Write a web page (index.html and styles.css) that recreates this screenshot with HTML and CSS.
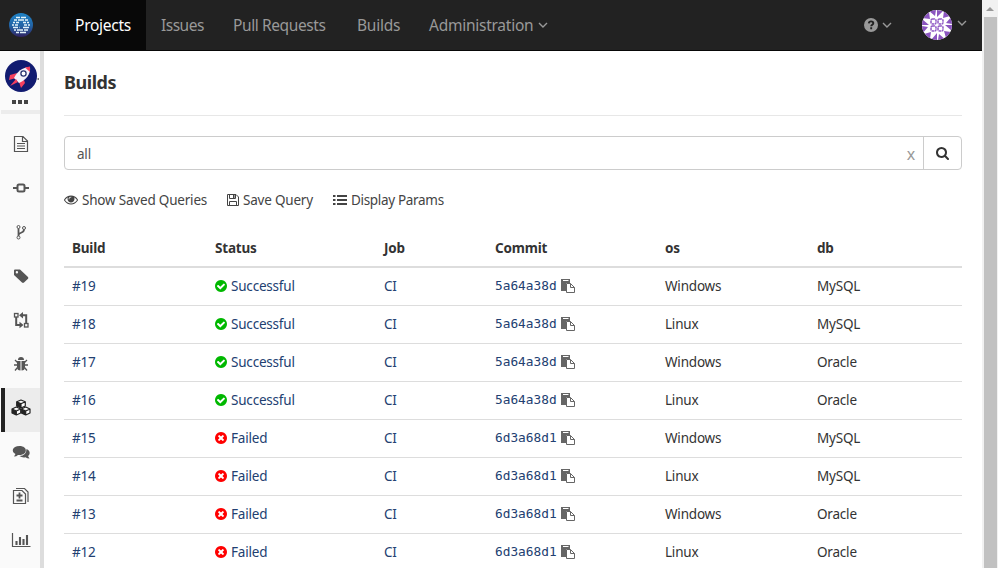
FILE: index.html
```
<!DOCTYPE html>
<html lang="en">
<head>
<meta charset="utf-8">
<title>Builds</title>
<link rel="stylesheet" href="styles.css">
</head>
<body>
<svg class="defs" aria-hidden="true">
<symbol id="ok" viewBox="0 0 1792 1792"><path d="M1412 734q0-28-18-46l-91-90q-19-19-45-19t-45 19l-408 407-226-226q-19-19-45-19t-45 19l-91 90q-18 18-18 46 0 27 18 45l362 362q19 19 45 19 27 0 46-19l543-543q18-18 18-45zm252 162q0 209-103 385.500t-279.500 279.500-385.500 103-385.500-103-279.500-279.500-103-385.500 103-385.500 279.500-279.500 385.500-103 385.500 103 279.500 279.500 103 385.500z"/></symbol>
<symbol id="fail" viewBox="0 0 1792 1792"><path d="M1277 1122q0-26-19-45l-181-181 181-181q19-19 19-45 0-27-19-46l-90-90q-19-19-46-19-26 0-45 19l-181 181-181-181q-19-19-45-19-27 0-46 19l-90 90q-19 19-19 46 0 26 19 45l181 181-181 181q-19 19-19 45 0 27 19 46l90 90q19 19 46 19 26 0 45-19l181-181 181 181q19 19 45 19 27 0 46-19l90-90q19-19 19-46zm387-226q0 209-103 385.500t-279.500 279.500-385.500 103-385.500-103-279.500-279.500-103-385.500 103-385.500 279.500-279.500 385.500-103 385.500 103 279.500 279.500 103 385.500z"/></symbol>
<symbol id="copy" viewBox="0 0 14 14"><path d="M0 0H9V4H5V12H0Z"/><path d="M2 1.500H7.500" stroke="#fff"/><path d="M5.500 4.500H9.500L13.500 8.500V13.500H5.500ZM9.500 4.500V8.500H13.500" fill="#fff" stroke="currentColor"/></symbol>
<symbol id="chev" viewBox="0 0 10 6"><path d="M1 1L5 5L9 1" fill="none" stroke="currentColor" stroke-width="1.400"/></symbol>
</svg>
<div class="app">
<div class="page">
<header class="nav">
  <div class="brand"><svg width="24" height="24" viewBox="0 0 24 24"><defs><linearGradient id="bg" x2="0" y2="1"><stop offset="0" stop-color="#1f83c6"/><stop offset=".55" stop-color="#2262a4"/><stop offset="1" stop-color="#302160"/></linearGradient></defs><circle cx="12" cy="12" r="12" fill="url(#bg)"/><g stroke="#e4f3fa" stroke-width="1.500"><path d="M7 4.500H11M12 4.500H17M5 7H8M9 7H15M16 7H19M4 9.500H6M7 9.500H10M14 9.500H17M18 9.500H20M3 12H5M6 12H9M15 12H18M19 12H21M4 14.500H9M10 14.500H10.500M14 14.500H20M5 17H7M8 17H14M15 17H19M7 19.500H10M11 19.500H17"/></g></svg></div>
  <nav class="links"><a class="t1 on">Projects</a><a class="t2">Issues</a><a class="t3">Pull Requests</a><a class="t4">Builds</a><a class="t5"><span>Administration</span><svg class="chev"><use href="#chev"/></svg></a></nav>
  <div class="user">
    <svg width="14" height="14" viewBox="0 0 14 14"><circle cx="7" cy="7" r="7" fill="#999"/><path d="M4.800 5.300C5 3.900 6 3.400 7 3.400C8.400 3.400 9.300 4.200 9.300 5.200C9.300 6.800 7.200 6.600 7.200 8.200M7.200 9.300V11.300" fill="none" stroke="#222" stroke-width="1.900"/></svg>
    <svg class="chev"><use href="#chev"/></svg>
    <svg class="avatar" width="30" height="30" viewBox="0 0 30 30"><clipPath id="round"><circle cx="15" cy="15" r="15"/></clipPath><g clip-path="url(#round)"><path fill="#fff" d="M0 0H30V30H0Z"/><g fill="#8b55c0"><path d="M6 0L14 0L13 6ZM15 0L21 1L15 7ZM22 1L28 6L21 8ZM0 8L7 2L8 9Z"/><path d="M30 6V14L24 13ZM30 15V21L23 15ZM29 22L24 28L22 21ZM24 30H16L17 24ZM15 30H9L15 23ZM8 29L2 24L9 22ZM0 24V16L6 17ZM0 15V9L7 15Z"/></g><g fill="none" stroke="#8f58c4" stroke-width="1.500" stroke-dasharray="2.400 .5"><rect x="9" y="9" width="5" height="5" rx="1.500"/><rect x="16" y="9" width="5" height="5" rx="1.500"/><rect x="9" y="16" width="5" height="5" rx="1.500"/><rect x="16" y="16" width="5" height="5" rx="1.500"/></g></g></svg>
    <svg class="chev last"><use href="#chev"/></svg>
  </div>
</header>
<div class="body">
<aside class="side">
  <div class="project"><svg width="34" height="32" viewBox="0 0 34 32"><circle cx="16" cy="16" r="16" fill="#111b70"/><path d="M12 13L5 15L4 20L11 18ZM19 20L20 23L16 28L14 22Z" fill="#f5405f"/><path d="M9 18C12 12 17 7 25 7C26 14 21 20 14 23Z" fill="#f3f1fa"/><path d="M20 7.500L25 6.500L25 12Z" fill="#f5405f"/><circle cx="18.500" cy="13.500" r="2.600" fill="#fff" stroke="#28326f" stroke-width="1.300"/><path d="M11 19L5 26L13 22Z" fill="#f5405f"/><path d="M32.500 18H34V20H32.500Z" fill="#777"/></svg></div>
  <div class="dots"><i></i><i></i><i></i></div>
  <div class="rule"></div>
  <div class="tools">
    <a><svg class="ic" viewBox="0 0 20 20"><path d="M4 2.500H12L16.500 7V17.500H3.500V2.500ZM11.500 2.500V7.500H16.500M6 9.500H14M6 12H14M6 14.500H14" fill="none" stroke="currentColor" stroke-width="1.200"/></svg></a>
    <a><svg class="ic" viewBox="0 0 20 20"><path d="M2 10H6M14 10H18" stroke="currentColor" stroke-width="2"/><rect x="6.500" y="6.500" width="7" height="7" rx="1.500" fill="none" stroke="currentColor" stroke-width="2"/></svg></a>
    <a><svg class="ic" viewBox="0 0 20 20"><g fill="none" stroke="currentColor"><circle cx="7.500" cy="5" r="1.500"/><circle cx="7.500" cy="15.500" r="1.500"/><circle cx="13" cy="6" r="1.500"/><path d="M7.500 6.500V14M13 7.500C13 11.500 8 10 7.500 13" stroke-width="1.800"/></g></svg></a>
    <a><svg class="ic" viewBox="0 0 20 20"><path d="M3 4.500Q3 3.500 4 3.500H9L17 11Q17.700 12 17 12.700L13 16.500Q12 17.300 11 16.500L3 9ZM5.900 5A1.200 1.200 0 1 0 5.900 7.400A1.200 1.200 0 1 0 5.900 5" fill="currentColor" fill-rule="evenodd"/></svg></a>
    <a><svg class="ic" viewBox="0 0 20 20"><g fill="none" stroke="currentColor"><rect x="3.500" y="3.500" width="3.500" height="3.500" stroke-width="1.300"/><rect x="13.500" y="13.500" width="3.500" height="3.500" stroke-width="1.300"/><path d="M5.200 7V15H9M15.200 13V5.200H11" stroke-width="2"/></g><path d="M8 5.200L12 2V8.400ZM12.500 15L8.500 11.800V18.200Z" fill="currentColor"/></svg></a>
    <a><svg class="ic" viewBox="0 0 20 20"><path d="M7 6A3 3 0 0 1 13 6ZM6 7H9.500V16.500Q6 16.500 6 13ZM10.500 7H14V13Q14 16.500 10.500 16.500Z" fill="currentColor"/><path d="M6.500 8.500L4 6M6 11H3M6.500 13.500L4 16.500M13.500 8.500L16 6M14 11H17M13.500 13.500L16 16.500" stroke="currentColor" stroke-width="1.300"/></svg></a>
    <a class="cur"><svg class="ic" viewBox="0 0 20 20"><g fill="#fff" stroke="#222" stroke-width="1.200" stroke-linejoin="round"><path d="M10 2L14.300 3.800V8L10 10L5.700 8V3.800ZM5.700 3.800L10 5.700L14.300 3.800M10 5.700V10"/><path d="M5.300 9L9.700 11V15L5.300 17L1 15V11ZM1 11L5.300 13L9.700 11M5.300 13V17M14.700 9L19 11V15L14.700 17L10.300 15V11ZM10.300 11L14.700 13L19 11M14.700 13V17"/></g><path d="M5.700 3.800L10 5.700V10L5.700 8ZM1 11L5.300 13V17L1 15ZM10.300 11L14.700 13V17L10.300 15Z" fill="#222"/></svg></a>
    <a><svg class="ic" viewBox="0 0 20 20"><path d="M15.500 7C20 9 19 13 17 14L18.500 16.500Q16 16.500 14.500 15.300Q11 16 8.500 14Q15.500 13.500 15.500 7Z" fill="currentColor"/><path d="M8.500 4C17 4 17 13 8.500 13L7 12.900Q5.500 14.500 3 14.500L4.500 12C0 10 1 4 8.500 4Z" fill="currentColor"/></svg></a>
    <a><svg class="ic" viewBox="0 0 20 20"><g fill="none" stroke="currentColor"><path d="M2.500 4.500H11L14.500 8V17.500H2.500ZM5 2.500H13.500L17 6V16" stroke-width="1.200"/><path d="M5.500 9.500H11.500M8.500 6.500V12.500M5.500 14.500H11.500" stroke-width="1.800"/></g></svg></a>
    <a><svg class="ic" viewBox="0 0 20 20"><path d="M1.500 3V16.500H19.500" fill="none" stroke="currentColor" stroke-width="1.200"/><path d="M5.500 15V11M9 15V7M12.500 15V9M16 15V5" stroke="currentColor" stroke-width="2.100"/></svg></a>
  </div>
</aside>
<main class="main">
  <h1>Builds</h1>
  <div class="search"><div class="field"><span>all</span><span class="clear">x</span></div><div class="go"><svg width="13" height="13" viewBox="64 128 1664 1664"><path d="M1216 832q0-185-131.500-316.500t-316.500-131.500-316.500 131.500-131.500 316.500 131.500 316.500 316.500 131.500 316.500-131.500 131.500-316.500zm512 832q0 52-38 90t-90 38q-54 0-90-38l-343-342q-179 124-399 124-143 0-273.500-55.500t-225-150-150-225-55.500-273.500 55.500-273.500 150-225 225-150 273.500-55.500 273.500 55.500 225 150 150 225 55.500 273.500q0 220-124 399l343 343q37 37 37 90z" fill="#333"/></svg></div></div>
  <div class="actions">
    <a class="a1"><svg width="14" height="14" viewBox="0 64 1792 1792"><path d="M1664 960q-152-236-381-353 61 104 61 225 0 185-131.500 316.500t-316.500 131.500-316.500-131.500-131.500-316.500q0-121 61-225-229 117-381 353 133 205 333.500 326.500t434.500 121.500 434.500-121.500 333.500-326.500zm-720-384q0-20-14-34t-34-14q-125 0-214.500 89.500t-89.500 214.500q0 20 14 34t34 14 34-14 14-34q0-86 61-147t147-61q20 0 34-14t14-34zm848 384q0 34-20 69-140 230-376.500 368.500t-499.500 138.500-499.500-139-376.500-368q-20-35-20-69t20-69q140-229 376.500-368t499.500-139 499.500 139 376.500 368q20 35 20 69z" fill="currentColor"/></svg><span>Show Saved Queries</span></a>
    <a class="a2"><svg width="12" height="12" viewBox="0 0 12 12"><path d="M.5 .5H9L11.500 3V11.500H.5ZM2.500 11.500V7.500H9.500V11.500M2.500 .5V4.500H8.500V.5" fill="none" stroke="currentColor"/><path d="M6 1H7.500V4H6Z" fill="currentColor"/></svg><span>Save Query</span></a>
    <a class="a3"><svg width="14" height="12" viewBox="0 0 14 12"><path d="M0 2H2.500M4 2H14M0 6H2.500M4 6H14M0 10H2.500M4 10H14" stroke="currentColor" stroke-width="2"/></svg><span>Display Params</span></a>
  </div>
  <table>
    <colgroup><col class="c1"><col class="c2"><col class="c3"><col class="c4"><col class="c5"><col></colgroup>
    <thead><tr><th>Build</th><th>Status</th><th>Job</th><th>Commit</th><th>os</th><th>db</th></tr></thead>
    <tbody id="rows"></tbody>
  </table>
</main>
</div>
</div>
<div class="scroll"><div class="up"></div><div class="thumb"></div></div>
</div>
<script src="builds.js"></script>
</body>
</html>
```
FILE: builds.js
```
const builds = [
  [19, true, "5a64a38d", "Windows", "MySQL"],
  [18, true, "5a64a38d", "Linux", "MySQL"],
  [17, true, "5a64a38d", "Windows", "Oracle"],
  [16, true, "5a64a38d", "Linux", "Oracle"],
  [15, false, "6d3a68d1", "Windows", "MySQL"],
  [14, false, "6d3a68d1", "Linux", "MySQL"],
  [13, false, "6d3a68d1", "Windows", "Oracle"],
  [12, false, "6d3a68d1", "Linux", "Oracle"]
];
document.getElementById("rows").innerHTML = builds.map(([id, ok, hash, os, db]) => `
<tr><td><a>#${id}</a></td>
<td><a class="status"><svg class="${ok ? "ok" : "fail"}"><use href="#${ok ? "ok" : "fail"}"/></svg>${ok ? "Successful" : "Failed"}</a></td>
<td><a>CI</a></td>
<td><div class="commit"><a>${hash}</a><svg><use href="#copy"/></svg></div></td>
<td>${os}</td><td>${db}</td></tr>`).join("");
```
FILE: styles.css
```
* { box-sizing: border-box; }
body { margin: 0; height: 568px; overflow: hidden; background: #fff; color: #333; font: 13.5px/20px "Noto Sans", "Open Sans", sans-serif; letter-spacing: -.2px; }
svg { display: block; flex: none; }
.defs { position: absolute; width: 0; height: 0; }
.app { display: flex; height: 568px; }
.page { width: 982px; display: flex; flex-direction: column; }
.nav { height: 51px; flex: none; display: flex; background: #222; border-bottom: 1px solid #080808; color: #999; }
.brand { width: 60px; padding: 13px 0 0 9px; }
.links { display: flex; font-size: 15.5px; letter-spacing: -.25px; }
.links a { display: flex; align-items: center; padding-left: 15px; white-space: nowrap; }
.links .on { background: #080808; color: #fff; }
.t1 { width: 86px; }
.t2 { width: 72px; letter-spacing: -.5px; }
.t3 { width: 124px; letter-spacing: -.4px; }
.t4 { width: 72px; }
.chev { width: 10px; height: 6px; }
.links .chev { margin-left: 5px; }
.user { margin-left: auto; display: flex; align-items: center; padding-right: 15px; }
.user .chev { margin-left: 4px; }
.user .avatar { margin-left: 30px; }
.user .last { margin: -4px 0 0 5px; }
.body { display: flex; flex: 1; min-height: 0; }
.side { width: 44px; background: #fafafa; border-right: 4px solid #ddd; padding-left: 1px; overflow: hidden; }
.project { padding: 9px 0 0 4px; }
.dots { display: flex; gap: 2px; padding: 8px 0 0 11px; height: 18px; }
.dots i { width: 4px; height: 4px; background: #444; }
.rule { height: 4px; background: #ececec; }
.tools { padding-top: 10px; }
.tools a { height: 44px; display: flex; align-items: center; padding: 0 0 4px 10px; color: #555; }
.tools .cur { background: #ececec; border-left: 4px solid #222; padding-left: 6px; }
.ic { width: 20px; height: 20px; }
.main { flex: 1; padding: 0 20px; min-width: 0; }
h1 { margin: 0 0 20px; height: 65px; padding-top: 19px; font-size: 18px; line-height: 24px; border-bottom: 1px solid #e7e7e7; letter-spacing: -.45px; }
.search { height: 34px; display: flex; border: 1px solid #ccc; border-radius: 4px; }
.field { flex: 1; display: flex; justify-content: space-between; align-items: center; padding: 2px 8px 0 12px; color: #555; }
.clear { color: #999; font-size: 16px; }
.go { width: 38px; border-left: 1px solid #ccc; display: grid; place-items: center; }
.actions { display: flex; padding-top: 20px; height: 59px; color: #444; }
.actions a { display: flex; align-items: center; height: 20px; gap: 4px; white-space: nowrap; }
.a1 { width: 163px; }
.a2 { width: 106px; }
.a3 { letter-spacing: -.32px; }
table { width: 100%; table-layout: fixed; border-collapse: separate; border-spacing: 0; }
.c1 { width: 143px; } .c2 { width: 169px; } .c3 { width: 111px; } .c4 { width: 170px; } .c5 { width: 152px; }
th { height: 39px; padding: 0 8px; text-align: left; font-weight: 700; border-bottom: 2px solid #ddd; }
td { height: 38px; padding: 0 8px 2px; border-bottom: 1px solid #ddd; }
td a { color: #224071; }
.status, .commit { display: flex; align-items: center; }
.status svg { width: 14px; height: 14px; margin: 0 3px 0 -1px; }
.ok { fill: #00b800; } .fail { fill: #f00; }
.commit { gap: 4px; }
.commit a { font: 12.8px/20px "DejaVu Sans Mono", monospace; letter-spacing: 0; }
.commit svg { width: 14px; height: 14px; color: #666; fill: #666; }
.scroll { width: 16px; background: #f1f1f1; display: flex; flex-direction: column; align-items: center; }
.up { width: 0; height: 0; margin: 7px 0 6px; border: 4px solid transparent; border-top: 0; border-bottom-color: #999; }
.thumb { flex: 1; width: 13px; background: #c1c1c1; }
```
